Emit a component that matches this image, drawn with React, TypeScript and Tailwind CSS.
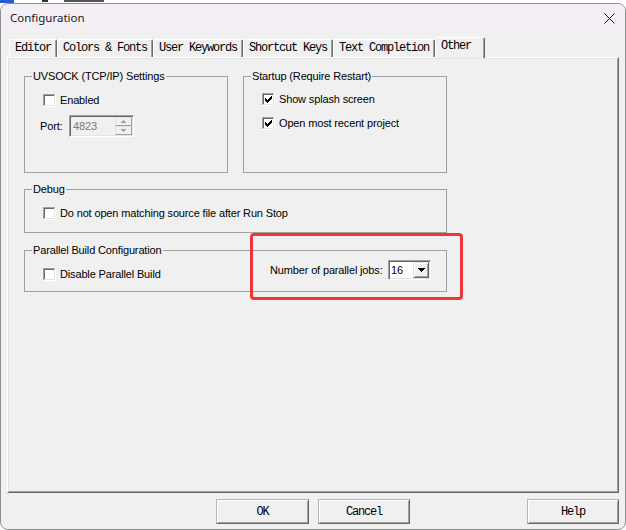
import React from "react";

function CheckBox({ checked }: { checked?: boolean }) {
  return (
    <svg width="13" height="13" viewBox="0 0 13 13" shapeRendering="crispEdges" className="shrink-0 block">
      <rect x="0" y="0" width="13" height="13" fill="#ffffff" />
      <rect x="0" y="0" width="12" height="1" fill="#a0a0a0" />
      <rect x="0" y="0" width="1" height="12" fill="#a0a0a0" />
      <rect x="1" y="1" width="10" height="1" fill="#696969" />
      <rect x="1" y="1" width="1" height="10" fill="#696969" />
      <rect x="11" y="1" width="1" height="11" fill="#e3e3e3" />
      <rect x="1" y="11" width="11" height="1" fill="#e3e3e3" />
      {checked && (
        <path d="M3 5H4V6H5V7H6V6H7V5H8V4H9V3H10V6H9V7H8V8H7V9H6V10H5V9H4V8H3Z" fill="#000000" />
      )}
    </svg>
  );
}

function Group({ title, className, children }: { title: string; className: string; children?: React.ReactNode }) {
  return (
    <div className={"relative border border-[#a0a0a0] " + className}>
      <span className="absolute left-[7px] top-[-7px] px-[1px] bg-[#f0f0f0] leading-[13px] whitespace-nowrap">{title}</span>
      {children}
    </div>
  );
}

function Tab({ label, selected, className }: { label: string; selected?: boolean; className: string }) {
  if (selected) {
    return (
      <div className={"relative z-10 h-[21px] mb-[-1px] pl-[5px] pt-[1px] bg-[#f0f0f0] border-l border-t border-white border-r border-r-[#696969] shadow-[inset_-1px_0_0_#a0a0a0] rounded-tl-[2px] rounded-tr-[2px] whitespace-nowrap " + className}>
        {label}
      </div>
    );
  }
  return (
    <div className={"h-[18px] pl-[5px] pt-[1px] border-l border-t border-white border-r border-r-[#696969] shadow-[inset_-1px_0_0_#a0a0a0] rounded-tl-[2px] rounded-tr-[2px] whitespace-nowrap " + className}>
      {label}
    </div>
  );
}

function Button({ label, className }: { label: string; className: string }) {
  return (
    <div
      className={
        "h-[25px] flex items-center justify-center bg-[#f0f0f0] border border-t-[#b4b4b4] border-l-[#b4b4b4] border-r-[#696969] border-b-[#696969] shadow-[inset_1px_1px_0_#ffffff,inset_-1px_-1px_0_#a0a0a0] font-['Liberation_Mono',monospace] text-[12px] tracking-[-1.2px] " +
        className
      }
    >
      {label}
    </div>
  );
}

export default function App() {
  return (
    <div className="w-[626px] h-[530px] bg-white relative overflow-hidden font-['Liberation_Sans',Arial,sans-serif] text-[11px] tracking-[-0.15px] text-black">
      {/* content behind the window */}
      <div className="h-[3px] flex items-start">
        <div className="w-[14px] h-[3px] bg-[#2a5bd7]" />
        <div className="ml-[28px] w-[6px] h-[2px] bg-[#333]" />
        <div className="ml-[16px] w-[40px] h-[2px] bg-[#555]" />
      </div>

      <div className="h-[527px] border border-[#8f8f8f] rounded-[8px] overflow-hidden flex flex-col bg-[#f0f0f0]">
        {/* title bar */}
        <div className="h-[28px] shrink-0 bg-[#f4eff5] flex items-center pl-[9px] pr-[10px] font-['Noto_Sans',sans-serif] text-[11.5px] tracking-normal text-[#1a1a1a]">
          <span>Configuration</span>
          <svg className="ml-auto" width="11" height="11" viewBox="0 0 11 11">
            <path d="M0.5 0.5L10.5 10.5M10.5 0.5L0.5 10.5" stroke="#1a1a1a" strokeWidth="1" />
          </svg>
        </div>

        {/* body */}
        <div className="flex-1 pt-[5px] pl-[6px]">
          {/* tabs */}
          <div className="h-[20px] flex items-end pl-[2px] font-['Liberation_Mono',monospace] text-[12px] tracking-[-1.2px] leading-[15px]">
            <Tab label="Editor" className="w-[48px]" />
            <Tab label="Colors & Fonts" className="w-[96px]" />
            <Tab label="User Keywords" className="w-[90px]" />
            <Tab label="Shortcut Keys" className="w-[90px]" />
            <Tab label="Text Completion" className="w-[102px]" />
            <Tab label="Other" selected className="w-[50px]" />
          </div>

          {/* tab page */}
          <div className="w-[612px] h-[436px] border-l border-t border-white border-r border-b border-r-[#696969] border-b-[#696969] shadow-[inset_1px_1px_0_#e3e3e3,inset_-1px_-1px_0_#a0a0a0] pl-[16px] pt-[18px]">
            <div className="flex gap-[15px]">
              <Group title="UVSOCK (TCP/IP) Settings" className="w-[204px] h-[97px]">
                <div className="pt-[17px] pl-[18px] flex items-center gap-[4px] h-[30px] leading-[13px]">
                  <CheckBox />
                  <span>Enabled</span>
                </div>
                <div className="mt-[8px] pl-[15px] flex items-center">
                  <span className="w-[29px]">Port:</span>
                  <div className="w-[65px] h-[22px] flex items-stretch border border-t-[#a0a0a0] border-l-[#a0a0a0] border-r-white border-b-white shadow-[inset_1px_1px_0_#696969,inset_-1px_-1px_0_#e3e3e3] p-[1px]">
                    <span className="flex-1 pl-[2px] pt-[2px] text-[#7a7a7a] leading-[14px]">4823</span>
                    <div className="w-[17px] flex flex-col">
                      <div className="flex-1 flex items-center justify-center border border-t-[#e3e3e3] border-l-[#e3e3e3] border-r-[#a0a0a0] border-b-[#a0a0a0] bg-[#f0f0f0]">
                        <svg width="5" height="3" viewBox="0 0 5 3" shapeRendering="crispEdges">
                          <path d="M2 0H3V1H4V2H5V3H0V2H1V1H2Z" fill="#a0a0a0" />
                        </svg>
                      </div>
                      <div className="flex-1 flex items-center justify-center border border-t-[#e3e3e3] border-l-[#e3e3e3] border-r-[#a0a0a0] border-b-[#a0a0a0] bg-[#f0f0f0]">
                        <svg width="5" height="3" viewBox="0 0 5 3" shapeRendering="crispEdges">
                          <path d="M0 0H5V1H4V2H3V3H2V2H1V1H0Z" fill="#a0a0a0" />
                        </svg>
                      </div>
                    </div>
                  </div>
                </div>
              </Group>

              <Group title="Startup (Require Restart)" className="w-[204px] h-[97px]">
                <div className="pt-[16px] pl-[18px] flex flex-col gap-[11px]">
                  <div className="flex items-center gap-[4px] h-[13px]">
                    <CheckBox checked />
                    <span>Show splash screen</span>
                  </div>
                  <div className="flex items-center gap-[4px] h-[13px]">
                    <CheckBox checked />
                    <span>Open most recent project</span>
                  </div>
                </div>
              </Group>
            </div>

            <Group title="Debug" className="mt-[16px] w-[423px] h-[44px]">
              <div className="pt-[17px] pl-[18px] flex items-center gap-[4px] h-[30px]">
                <CheckBox />
                <span>Do not open matching source file after Run Stop</span>
              </div>
            </Group>

            <Group title="Parallel Build Configuration" className="mt-[17px] w-[423px] h-[42px]">
              <div className="flex items-start">
                <div className="w-[245px] pl-[18px] pt-[15px] flex items-center gap-[4px]">
                  <CheckBox />
                  <span>Disable Parallel Build</span>
                </div>
                <div className="pt-[9px] flex items-center">
                  <span className="w-[118px] whitespace-nowrap">Number of parallel jobs:</span>
                  <div className="w-[43px] h-[20px] flex items-stretch bg-white border border-t-[#a0a0a0] border-l-[#a0a0a0] border-r-white border-b-white shadow-[inset_1px_1px_0_#696969,inset_-1px_-1px_0_#e3e3e3] p-[1px]">
                    <span className="flex-1 pl-[1px] leading-[16px]">16</span>
                    <div className="w-[16px] flex items-center justify-center bg-[#f0f0f0] border border-t-[#e3e3e3] border-l-[#e3e3e3] border-r-[#696969] border-b-[#696969] shadow-[inset_1px_1px_0_#ffffff,inset_-1px_-1px_0_#a0a0a0]">
                      <svg width="7" height="4" viewBox="0 0 7 4" shapeRendering="crispEdges">
                        <path d="M0 0H7V1H6V2H5V3H4V4H3V3H2V2H1V1H0Z" fill="#000000" />
                      </svg>
                    </div>
                  </div>
                </div>
              </div>
            </Group>
          </div>

          {/* buttons */}
          <div className="mt-[6px] flex">
            <Button label="OK" className="ml-[209px] w-[93px]" />
            <Button label="Cancel" className="ml-[9px] w-[92px]" />
            <Button label="Help" className="ml-[117px] w-[92px]" />
          </div>
        </div>
      </div>

      {/* red annotation */}
      <div className="absolute left-[250px] top-[233px] w-[213px] h-[67px] border-[3px] border-[#ef3535] rounded-[4px]" />
    </div>
  );
}
